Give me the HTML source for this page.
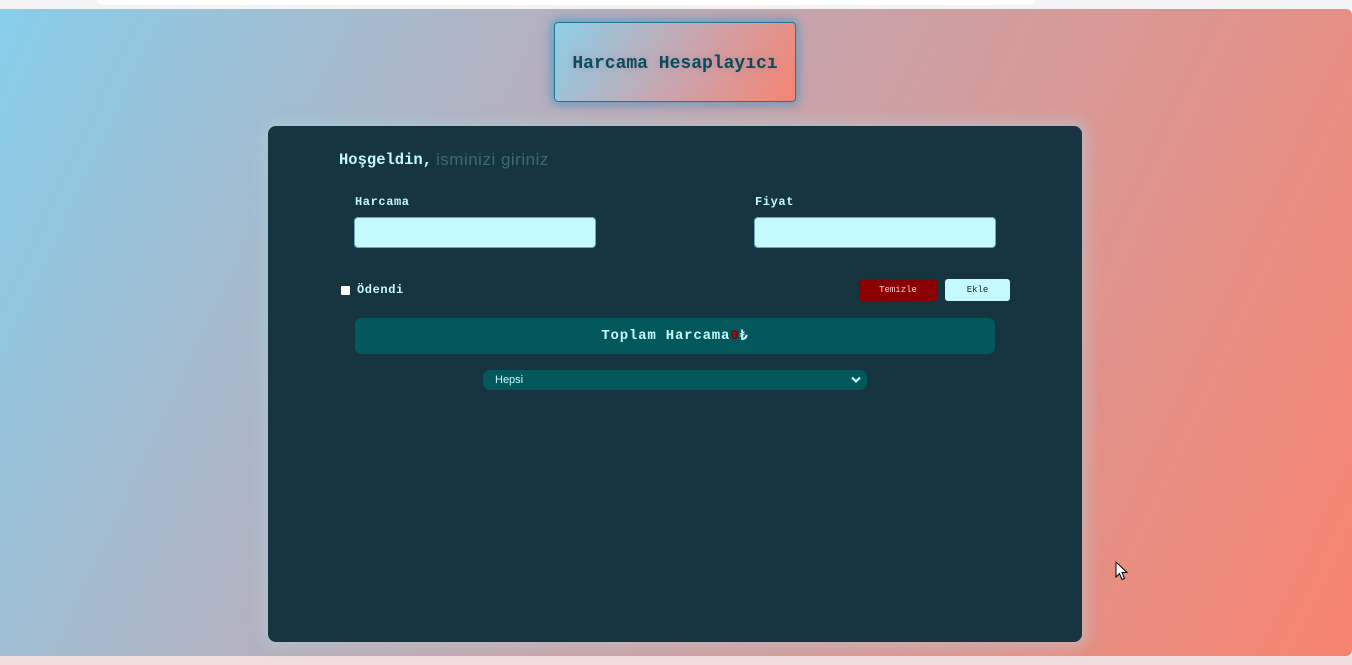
<!DOCTYPE html>
<html><head><meta charset="utf-8">
<style>
*{box-sizing:border-box;margin:0;padding:0}
html,body{width:1352px;height:665px;overflow:hidden;background:#f3f3f3;font-family:"Liberation Mono",monospace}
.topwhite{position:absolute;left:97px;top:0;width:938px;height:5px;background:#fff;border-radius:0 0 6px 6px}
.bottom{position:absolute;left:0;top:656px;width:1352px;height:9px;background:#f2dede}
.main{position:absolute;left:0;top:9px;width:1352px;height:647px;background:linear-gradient(115deg,#87ceeb 0%,#c3a7b0 45%,#f7836f 100%);border-radius:0 6px 6px 0}
.title{position:absolute;left:554px;top:22px;width:242px;height:80px;border:1px solid #1c7a94;border-radius:4px;background:linear-gradient(120deg,#8ccfe8,#cca3ab 55%,#f58472);box-shadow:0 0 10px 3px rgba(40,140,200,.55);display:flex;align-items:center;justify-content:center;color:#0b4d55;font-weight:bold;font-size:18px;padding-top:3px;text-shadow:0 0 6px rgba(140,120,190,.5)}
.card{position:absolute;left:268px;top:126px;width:814px;height:516px;background:#163541;border-radius:8px;box-shadow:0 0 14px 6px rgba(180,210,220,.45)}
.hos{position:absolute;left:71px;top:25px;color:#c4fafd;font-weight:bold;font-size:15.5px}
.ph{position:absolute;left:168px;top:24px;color:#3a6a72;font-family:"Liberation Sans",sans-serif;font-size:17px;letter-spacing:0.5px}
.lbl{position:absolute;color:#c4fafd;font-size:12px;font-weight:bold;letter-spacing:0.6px}
.inp{position:absolute;width:242px;height:31px;background:#c4fafd;border:1px solid #6aa9c4;border-radius:4px}
.cb{position:absolute;left:73px;top:160px;width:9px;height:9px;background:#fff;border-radius:1px}
.btn{position:absolute;top:153px;height:22px;border-radius:3px;font-size:9px;display:flex;align-items:center;justify-content:center}
.total{position:absolute;left:87px;top:192px;width:640px;height:36px;background:#02585a;border-radius:7px;color:#c4fafd;font-size:14px;font-weight:bold;letter-spacing:0.8px;display:flex;align-items:center;justify-content:center}
.sel{position:absolute;left:215px;top:244px;width:384px;height:20px;background:#02585a;border-radius:7px;color:#c4fafd;font-family:"Liberation Sans",sans-serif;font-size:11px;padding-left:12px;line-height:20px}
</style></head><body>
<div class="topwhite"></div>
<div class="main"></div>
<div class="bottom"></div>
<div class="title">Harcama Hesaplayıcı</div>
<div class="card">
 <div class="hos">Hoşgeldin,</div>
 <div class="ph">isminizi giriniz</div>
 <div class="lbl" style="left:87px;top:69px">Harcama</div>
 <div class="lbl" style="left:487px;top:69px">Fiyat</div>
 <div class="inp" style="left:86px;top:91px"></div>
 <div class="inp" style="left:486px;top:91px"></div>
 <div class="cb"></div>
 <div class="lbl" style="left:89px;top:157px">Ödendi</div>
 <div class="btn" style="left:591px;width:78px;background:#8b0000;color:#f0d0d0">Temizle</div>
 <div class="btn" style="left:677px;width:65px;background:#c4fafd;color:#222">Ekle</div>
 <div class="total">Toplam Harcama<span style="color:#8b0000">0</span>₺</div>
 <div class="sel">Hepsi<svg style="position:absolute;right:6px;top:6px" width="10" height="8" viewBox="0 0 10 8"><path d="M1 1.5 L5 5.5 L9 1.5" stroke="#c4fafd" stroke-width="2.2" fill="none"/></svg></div>
</div>
<svg style="position:absolute;left:1115px;top:561px" width="13" height="20" viewBox="0 0 13 20"><path d="M1 1 L1 16 L4.5 12.5 L7 18.5 L9.5 17.5 L7 11.5 L12 11.5 Z" fill="#fff" stroke="#000" stroke-width="1"/></svg>
</body></html>
